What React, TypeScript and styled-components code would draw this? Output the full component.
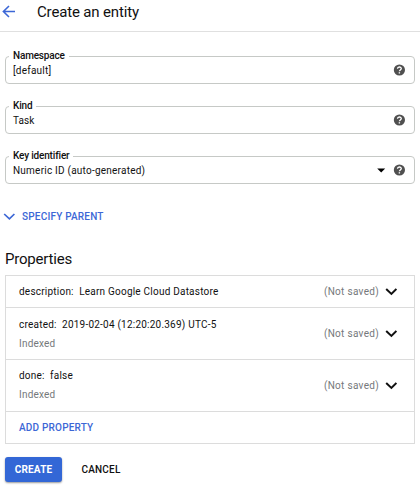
import React from "react";
import styled, { createGlobalStyle } from "styled-components";

const GlobalStyle = createGlobalStyle`
  * { box-sizing: border-box; }
  body { margin: 0; background: #fff; }
`;

const Page = styled.main`
  width: 420px;
  height: 485px;
  overflow: hidden;
  background: #fff;
  color: #111;
  font-family: Roboto, "Liberation Sans", sans-serif;
  font-size: 10px;
  line-height: 14px;
`;

const Header = styled.header`
  display: flex;
  align-items: center;
  height: 32px;
  padding: 0 0 8px 2px;
  border-bottom: 1px solid #e0e0e0;
`;

const Title = styled.h1`
  margin: 0 0 0 21px;
  font-size: 15px;
  line-height: 22px;
  font-weight: 400;
  letter-spacing: -0.15px;
`;

const Form = styled.section`
  display: flex;
  flex-direction: column;
  gap: 15px;
  padding: 17px 5px 0;
`;

const Field = styled.fieldset`
  height: 35px;
  margin: 0;
  padding: 0 9px 0 3px;
  border: 1px solid #c6c9c6;
  border-radius: 4px;
  min-width: 0;
`;

const Legend = styled.legend`
  height: 14px;
  padding: 0 4px;
  line-height: 13px;
  font-weight: 500;
  letter-spacing: -0.17px;
`;

const Control = styled.div`
  display: flex;
  align-items: center;
  gap: 7px;
  height: 14px;
  padding-left: 4px;
`;

const Value = styled.span<{ $spacing?: number }>`
  flex: 1;
  white-space: pre;
  letter-spacing: ${(p) => p.$spacing ?? 0.22}px;
`;

const FieldValue = styled(Value)`
  padding-top: 2px;
`;

const ParentToggle = styled.button`
  display: flex;
  align-items: center;
  gap: 7px;
  height: 16px;
  margin: 25px 0 0 3px;
  padding: 0;
  border: 0;
  background: none;
  color: #3c67d6;
  font: 500 10px/16px Roboto, sans-serif;
  letter-spacing: 0.2px;
`;

const SectionTitle = styled.h2`
  margin: 23px 0 0 5px;
  font-size: 15px;
  line-height: 22px;
  font-weight: 400;
  letter-spacing: -0.2px;
`;

const PropertyList = styled.div`
  margin: 5px 5px 0;
  border: 1px solid #dcdcdc;
`;

const PropertyRow = styled.div<{ $tall?: boolean }>`
  display: flex;
  align-items: center;
  height: ${(p) => (p.$tall ? 52 : 32)}px;
  padding: 0 17px 0 13px;
  border-bottom: 1px solid #dcdcdc;
`;

const PropertyText = styled.div<{ $drop?: number }>`
  display: flex;
  flex: 1;
  flex-direction: column;
  gap: 5px;
  padding-top: ${(p) => p.$drop ?? 0}px;
`;

const Muted = styled.span`
  color: #75787b;
  letter-spacing: 0.2px;
`;

const Status = styled(Muted)`
  margin-right: 6px;
  letter-spacing: 0.3px;
`;

const AddProperty = styled.button`
  display: block;
  height: 31px;
  padding: 0 13px;
  border: 0;
  background: none;
  color: #3c67d6;
  font: 500 10px/31px Roboto, sans-serif;
  letter-spacing: 0.2px;
`;

const Actions = styled.footer`
  display: flex;
  gap: 9px;
  padding: 13px 5px 0;
`;

const Button = styled.button<{ $primary?: boolean }>`
  height: 25px;
  padding: 0;
  width: ${(p) => (p.$primary ? 57 : 60)}px;
  border: 0;
  border-radius: 3px;
  background: ${(p) => (p.$primary ? "#3367d6" : "transparent")};
  box-shadow: ${(p) => (p.$primary ? "0 1px 2px rgba(0,0,0,.4)" : "none")};
  color: ${(p) => (p.$primary ? "#fff" : "#111")};
  font: ${(p) => (p.$primary ? 700 : 500)} 10px/25px Roboto, sans-serif;
  letter-spacing: 0.2px;
`;

const Icon = styled.svg`
  display: block;
  flex: none;
`;

const BackArrow = () => (
  <Icon width="14" height="14" viewBox="0 0 14 14" fill="none" stroke="#3c67d6" strokeWidth="1.6">
    <path d="M13 6.5H1.5M7 1 1.4 6.5 7 12" />
  </Icon>
);

const Help = () => (
  <Icon width="12" height="12" viewBox="0 0 12 12">
    <circle cx="6.4" cy="6" r="5.6" fill="#505050" />
    <path d="M4.5 4.8c0-2.4 3.8-2.3 3.8-.2 0 1.3-1.9 1.4-1.9 2.7" fill="none" stroke="#fff" strokeWidth="1.3" />
    <path d="M5.7 8.2h1.4v1.3H5.7z" fill="#fff" />
  </Icon>
);

const Caret = () => (
  <Icon width="9" height="5" viewBox="0 0 9 5">
    <path d="M.2.5h8l-4 4z" fill="#000" />
  </Icon>
);

const Chevron = ({ color = "#111", weight = 2 }: { color?: string; weight?: number }) => (
  <Icon width="12" height="8" viewBox="0 0 12 8" fill="none" stroke={color} strokeWidth={weight}>
    <path d="M1.2 1 6.4 5.9l5-4.9" />
  </Icon>
);

const fields = [
  { label: "Namespace", value: "[default]" },
  { label: "Kind", value: "Task", spacing: 0.1 },
  { label: "Key identifier", value: "Numeric ID (auto-generated)", spacing: 0.23, select: true },
];

const properties = [
  { text: "description:  Learn Google Cloud Datastore" },
  { text: "created:  2019-02-04 (12:20:20.369) UTC-5", indexed: true, drop: 2 },
  { text: "done:  false", indexed: true },
];

export default function App() {
  return (
    <Page>
      <GlobalStyle />
      <Header>
        <BackArrow />
        <Title>Create an entity</Title>
      </Header>
      <Form>
        {fields.map((f) => (
          <Field key={f.label}>
            <Legend>{f.label}</Legend>
            <Control>
              <FieldValue $spacing={f.spacing}>{f.value}</FieldValue>
              {f.select && <Caret />}
              <Help />
            </Control>
          </Field>
        ))}
      </Form>
      <ParentToggle>
        <Chevron color="#3c67d6" weight={1.7} />
        SPECIFY PARENT
      </ParentToggle>
      <SectionTitle>Properties</SectionTitle>
      <PropertyList>
        {properties.map((p) => (
          <PropertyRow key={p.text} $tall={p.indexed}>
            <PropertyText $drop={p.drop}>
              <Value>{p.text}</Value>
              {p.indexed && <Muted>Indexed</Muted>}
            </PropertyText>
            <Status>(Not saved)</Status>
            <Chevron />
          </PropertyRow>
        ))}
        <AddProperty>ADD PROPERTY</AddProperty>
      </PropertyList>
      <Actions>
        <Button $primary>CREATE</Button>
        <Button>CANCEL</Button>
      </Actions>
    </Page>
  );
}
